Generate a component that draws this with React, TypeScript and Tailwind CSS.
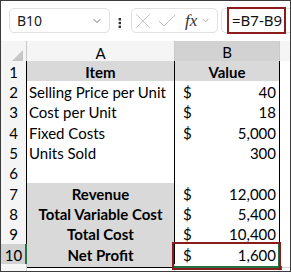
import React from 'react';
import { X, Check, ChevronDown } from 'lucide-react';

interface Row {
  n: number;
  h: string;
  a?: string;
  b?: string;
  bold?: boolean;
  cur?: boolean;
  head?: boolean;
  sel?: boolean;
}

const rows: Row[] = [
  { n: 1, h: 'h-[20px]', a: 'Item', b: 'Value', head: true },
  { n: 2, h: 'h-[20px]', a: 'Selling Price per Unit', b: '40', cur: true },
  { n: 3, h: 'h-[21px]', a: 'Cost per Unit', b: '18', cur: true },
  { n: 4, h: 'h-[20px]', a: 'Fixed Costs', b: '5,000', cur: true },
  { n: 5, h: 'h-[20px]', a: 'Units Sold', b: '300' },
  { n: 6, h: 'h-[21px]' },
  { n: 7, h: 'h-[20px]', a: 'Revenue', b: '12,000', bold: true, cur: true },
  { n: 8, h: 'h-[20px]', a: 'Total Variable Cost', b: '5,400', bold: true, cur: true },
  { n: 9, h: 'h-[21px]', a: 'Total Cost', b: '10,400', bold: true, cur: true },
  { n: 10, h: 'h-[20px]', a: 'Net Profit', b: '1,600', bold: true, cur: true, sel: true },
];

const cols = 'grid grid-cols-[26px_148px_105px_1fr]';
const cell = "font-['Lato',sans-serif] text-[15px] text-black";

function FormulaBar() {
  return (
    <div className="flex h-[40px] items-start pt-[7px] font-['Noto_Sans',sans-serif]">
      <div className="ml-[8px] flex h-[25px] w-[101px] items-center justify-between rounded-[5px] border border-[#e0e0e0] bg-white pl-[7px] pr-[6px]">
        <span className="text-[14px] text-[#1a1a1a]">B10</span>
        <ChevronDown size={12} strokeWidth={1.5} className="text-[#444]" />
      </div>
      <svg width="4" height="10" viewBox="0 0 4 10" className="ml-[8px] mt-[10px] text-[#333]">
        <rect x="0.6" y="0" width="2.4" height="2.4" fill="currentColor" />
        <rect x="0.6" y="3.8" width="2.4" height="2.4" fill="currentColor" />
        <rect x="0.6" y="7.6" width="2.4" height="2.4" fill="currentColor" />
      </svg>
      <div className="ml-[9px] flex h-[25px] w-[87px] items-center overflow-hidden rounded-[5px] border border-[#e0e0e0] bg-white">
        <X size={26} strokeWidth={0.9} className="-ml-[2px] shrink-0 text-[#c4c4c4]" />
        <Check size={24} strokeWidth={1} className="-ml-[1px] shrink-0 text-[#c4c4c4]" />
        <span className="ml-[6px] font-['Liberation_Serif',serif] text-[17px] italic text-[#333]">fx</span>
        <ChevronDown size={11} strokeWidth={1.5} className="ml-[3px] shrink-0 text-[#888]" />
      </div>
      <div className="ml-[3px] flex h-[25px] flex-1 items-center rounded-l-[5px] border border-r-0 border-[#e0e0e0] bg-white">
        <span className="-my-[1px] ml-[5px] flex h-[27px] w-[59px] items-center border-2 border-[#8b1c1c] pl-[3px] text-[15px] text-[#111]">
          =B7-B9
        </span>
      </div>
    </div>
  );
}

function HeaderRow() {
  return (
    <div className={`${cols} h-[20px]`}>
      <div className="flex items-end justify-end border-r border-b border-[#c8c8c8] bg-[#f5f5f5] pb-[3px] pr-[3px]">
        <svg width="12" height="12" viewBox="0 0 12 12">
          <path d="M12 0 L12 12 L0 12 Z" fill="#c6c6c6" />
        </svg>
      </div>
      <div className={`${cell} flex items-center justify-center border-r border-b border-[#c8c8c8] bg-[#f5f5f5]`}>A</div>
      <div className={`${cell} flex items-center justify-center border-r border-b-2 border-r-[#c8c8c8] border-b-[#217346] bg-[#d2d2d2] text-[#0e5c2f]`}>B</div>
      <div className="border-b border-[#c8c8c8] bg-[#f5f5f5]" />
    </div>
  );
}

function DataRow({ r }: { r: Row }) {
  const fill = r.head || r.bold ? 'bg-[#d9d9d9]' : 'bg-white';
  return (
    <div className={`${cols} ${r.h}`}>
      {r.sel ? (
        <div className={`${cell} flex items-center justify-center border-r-2 border-b border-r-[#217346] border-b-[#c8c8c8] bg-[#d2d2d2] pl-[1px] text-[#17703f]`}>
          {r.n}
        </div>
      ) : (
        <div className={`${cell} flex items-center justify-center border-r border-b border-r-black border-b-[#d4d4d4] bg-[#f5f5f5] text-[#222]`}>
          {r.n}
        </div>
      )}
      <div
        className={`${cell} ${fill} flex items-center border-r border-b border-black ${
          r.head || r.bold ? 'justify-center font-bold' : 'pl-[2px]'
        }`}
      >
        {r.a}
      </div>
      <div className={`${cell} relative flex items-center border-r border-b border-black ${r.head ? 'bg-[#d9d9d9]' : 'bg-white'}`}>
        {r.head ? (
          <span className="w-full text-center font-bold">{r.b}</span>
        ) : (
          <div className="flex w-full items-center justify-between pl-[8px] pr-[3px]">
            <span>{r.cur ? '$' : ''}</span>
            <span>{r.b}</span>
          </div>
        )}
        {r.sel && (
          <>
            <div className="absolute -top-[1px] -right-[1px] -bottom-[1px] left-[-1px] border-r-2 border-b-2 border-[#217346]" />
            <div className="absolute -right-[3px] -bottom-[3px] h-[4px] w-[4px] bg-[#217346]" />
            <div className="absolute -top-[2px] -right-[2px] -bottom-[3px] -left-[3px] border-2 border-[#8b1c1c]" />
          </>
        )}
      </div>
      <div className="border-b border-[#d4d4d4] bg-white" />
    </div>
  );
}

export default function App() {
  return (
    <div className="flex h-[272px] w-[291px] flex-col overflow-hidden border border-[#3c3c3c] bg-white">
      <FormulaBar />
      <HeaderRow />
      {rows.map((r) => (
        <DataRow key={r.n} r={r} />
      ))}
      <div className={`${cols} flex-1`}>
        <div className="border-r border-[#c8c8c8] bg-[#f5f5f5]" />
        <div className="border-r border-[#d4d4d4]" />
        <div className="border-r border-[#d4d4d4]" />
        <div />
      </div>
    </div>
  );
}
